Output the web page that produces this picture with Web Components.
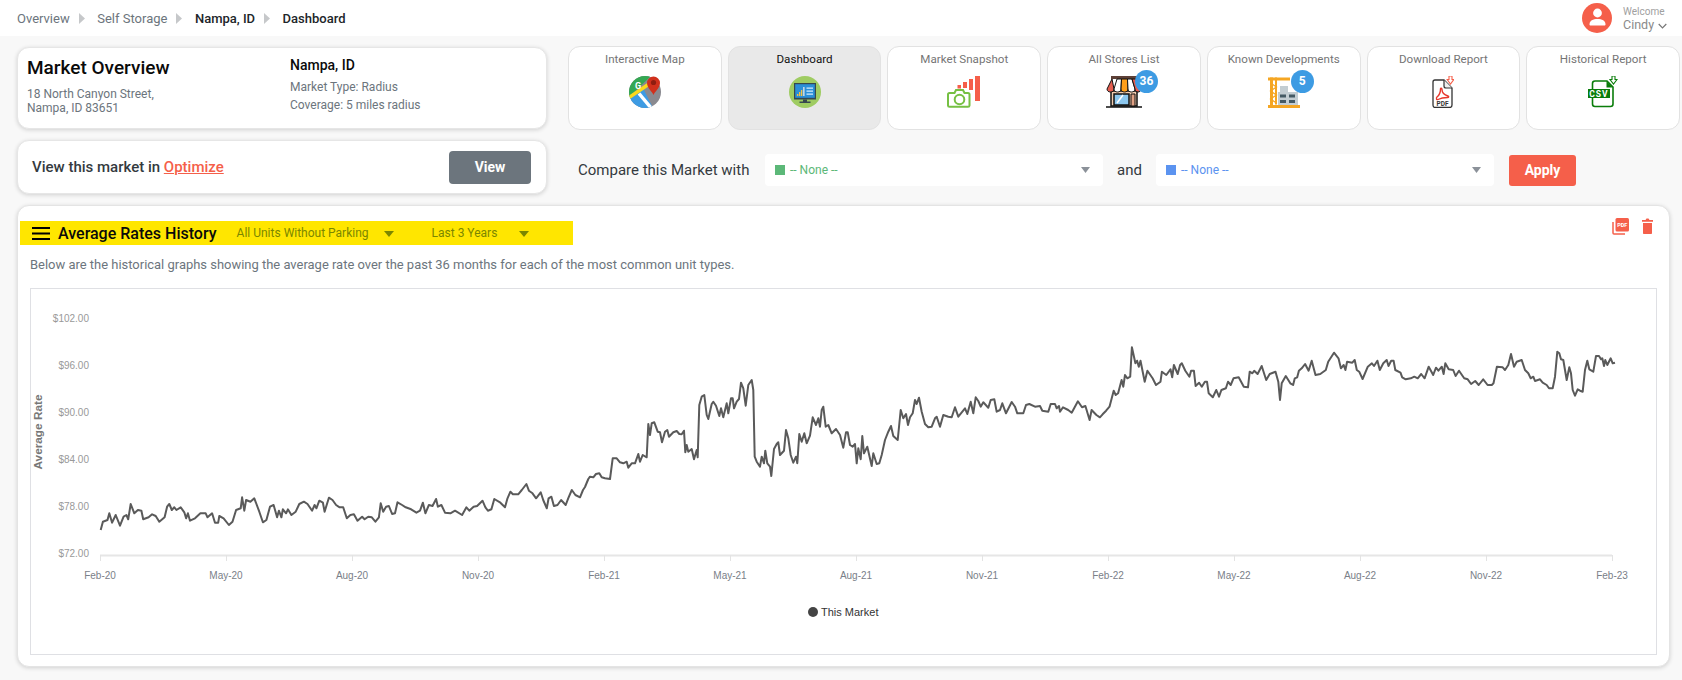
<!DOCTYPE html>
<html lang="en">
<head>
<meta charset="utf-8">
<title>Average Rates History</title>
<style>
  html, body { margin: 0; padding: 0; background: #f8f8f8; font-family: Roboto, "Liberation Sans", sans-serif; overflow: hidden; }
  market-page { width: 1682px; height: 680px; }
</style>
</head>
<body>
<market-page></market-page>
<script>
class AppTopbar extends HTMLElement {
  connectedCallback() {
    const arrow = '<svg class="arr" width="6" height="11" viewBox="0 0 6 11"><path d="M0 0l6 5.5L0 11z" fill="#c6c8ca"/></svg>';
    this.attachShadow({ mode: 'open' }).innerHTML = `
      <style>
        :host { display: flex; align-items: center; justify-content: space-between; height: 36px; background: #fff; padding: 0 15px 0 17px; box-sizing: border-box; }
        .crumbs { display: flex; align-items: center; font-size: 13px; color: #6c757d; }
        .arr { margin: 0 12.5px 0 9px; }
        b { font-weight: 500; color: #212529; }
        .user { display: flex; align-items: center; }
        .who { margin-left: 11px; color: #8a8a8a; font-size: 12.5px; line-height: 14px; width: 44px; white-space: nowrap; }
        .who small { display: block; font-size: 10px; line-height: 13px; color: #a0a0a0; }
        .who svg { margin-left: 1px; }
      </style>
      <div class="crumbs"><span>Overview</span>${arrow}<span>Self Storage</span>${arrow}<b>Nampa, ID</b>${arrow}<b>Dashboard</b></div>
      <div class="user">
        <svg width="30" height="30" viewBox="0 0 30 30"><circle cx="15" cy="15" r="15" fill="#f55f4a"/><circle cx="15.5" cy="10" r="4.4" fill="#fff"/><path d="M7.5 21.5c0-4 3.5-5.5 8-5.5s8 1.500 8 5.500c0 .6-.5 1-1 1h-14c-.5 0-1-.4-1-1z" fill="#fff"/></svg>
        <div class="who"><small>Welcome</small>Cindy <svg width="9" height="6" viewBox="0 0 9 6"><path d="M.7 1l3.800 3.800L8.300 1" fill="none" stroke="#777" stroke-width="1.200"/></svg></div>
      </div>`;
  }
}

class MarketCard extends HTMLElement {
  connectedCallback() {
    this.attachShadow({ mode: 'open' }).innerHTML = `
      <style>
        :host { display: flex; height: 82px; box-sizing: border-box; background: #fff; border: 1px solid #e6e6e6; border-radius: 12px; box-shadow: 0 1px 4px rgba(0,0,0,.16); padding: 7px 9px; color: #6c757d; }
        .l { width: 263px; }
        h2 { margin: 0 0 6px; font-size: 19px; line-height: 26px; font-weight: 500; color: #0a0a0a; }
        .addr { line-height: 14px; font-size: 12px; }
        h3 { margin: 0 0 3px; font-size: 14px; line-height: 20px; font-weight: 500; color: #0a0a0a; }
        .r div { line-height: 18px; font-size: 12px; }
      </style>
      <div class="l"><h2>Market Overview</h2><div class="addr">18 North Canyon Street,<br>Nampa, ID 83651</div></div>
      <div class="r"><h3>Nampa, ID</h3><div>Market Type: Radius</div><div>Coverage: 5 miles radius</div></div>`;
  }
}

class ViewCard extends HTMLElement {
  connectedCallback() {
    this.attachShadow({ mode: 'open' }).innerHTML = `
      <style>
        :host { display: flex; align-items: center; justify-content: space-between; height: 54px; box-sizing: border-box; background: #fff; border: 1px solid #e6e6e6; border-radius: 12px; box-shadow: 0 1px 4px rgba(0,0,0,.16); padding: 0 15px 0 14px; font-size: 15px; font-weight: 500; color: #343a40; }
        a { color: #f55f4a; text-decoration: underline; }
        button { width: 82px; height: 33px; border: 0; border-radius: 4px; background: #6c757d; color: #fff; font: 700 14px Roboto, sans-serif; }
      </style>
      <span>View this market in <a>Optimize</a></span><button>View</button>`;
  }
}

class NavTile extends HTMLElement {
  connectedCallback() {
    const active = this.hasAttribute('active');
    const badge = this.getAttribute('badge');
    this.attachShadow({ mode: 'open' }).innerHTML = `
      <style>
        :host { display: flex; flex-direction: column; align-items: center; box-sizing: border-box; height: 84px; background: ${active ? '#e9e9e9' : '#fff'}; border: 1px solid #e2e2e2; border-radius: 12px; padding-top: 4px; font-size: 11.6px; line-height: 16px; color: ${active ? '#111' : '#757575'}; }
        .ic { position: relative; margin-top: 9px; height: 32px; display: flex; }
        .n { position: absolute; top: -6px; right: var(--bx, -16px); width: 23px; height: 23px; border-radius: 50%; background: #3d9be3; color: #fff; font-size: 12px; font-weight: 700; line-height: 23px; text-align: center; }
      </style>
      <span>${this.getAttribute('label')}</span>
      <div class="ic"><slot></slot>${badge ? `<span class="n">${badge}</span>` : ''}</div>`;
  }
}

class SelectBox extends HTMLElement {
  connectedCallback() {
    const c = this.getAttribute('color');
    this.attachShadow({ mode: 'open' }).innerHTML = `
      <style>
        :host { display: flex; align-items: center; box-sizing: border-box; width: 338px; height: 32px; background: #fff; border-radius: 4px; padding: 0 13px 0 10px; font-size: 12px; color: ${c}; }
        i { width: 10px; height: 10px; background: ${c}; margin-right: 5px; }
        span { flex: 1; }
        svg { display: block; }
      </style>
      <i></i><span>-- None --</span>
      <svg width="9" height="6" viewBox="0 0 9 6"><path d="M0 0h9L4.500 6z" fill="#8b9199"/></svg>`;
  }
}

class CompareRow extends HTMLElement {
  connectedCallback() {
    this.attachShadow({ mode: 'open' }).innerHTML = `
      <style>
        :host { display: flex; align-items: center; padding: 24px 0 0 10px; font-size: 15px; color: #343a40; }
        .a { margin: 0 15px 0 14px; width: 24px; }
        .w { width: 187px; }
        button { margin-left: 15px; width: 67px; height: 31px; border: 0; border-radius: 3px; background: #f55f4a; color: #fff; font: 700 14px Roboto, sans-serif; }
      </style>
      <span class="w">Compare this Market with</span>
      <select-box color="#5cb878"></select-box>
      <span class="a">and</span>
      <select-box color="#5b93f0"></select-box>
      <button>Apply</button>`;
  }
}

class RateChart extends HTMLElement {
  connectedCallback() {
    // traced from the reference, one list per zoom crop: [x offset, x scale, y offset, y scale]
    const seg = (ox, sx, oy, sy, a) => { const o = []; for (let i = 0; i < a.length; i += 2) o.push((ox + a[i] / sx).toFixed(1) + ',' + (oy + a[i + 1] / sy).toFixed(1)); return o; };
    const pts = [
      ...seg(20, 2.8, 280, 3, [226,750,232,725,245,720,250,700,258,728,268,705,280,737,290,710,298,705,303,718,310,672,320,700,330,690,340,692,345,718,360,712,370,703,380,708,390,725,405,712,412,680,418,672,425,690,432,682,438,690,450,682,460,697,465,715,470,700,476,722,490,715,505,700,520,700,525,712,538,700,546,728,555,728,558,708,570,715,585,735,595,725,605,690,618,685,622,652,628,692,633,660,645,665,656,655,670,695,680,727,690,720,700,680,710,675,720,712,725,692,732,712,736,688,745,700,750,688,760,705,772,695,782,672,795,665,805,672,818,692,825,675,830,685,838,662,848,668,853,695,865,653,875,660,885,675,895,682,905,682,915,715,925,705,935,703,945,722,958,710,965,718,975,710,985,712,995,725,1005,712,1010,670,1017,695,1025,680,1033,678,1042,702,1050,700,1057,667,1070,675,1080,682,1095,688,1110,698,1120,692,1128,668,1135,700,1145,675,1155,678,1165,657,1170,680,1180,675,1190,698,1205,700,1218,692,1238,705,1250,682,1258,692,1270,680,1280,678,1295,662,1303,682,1310,692,1320,688,1328,657,1345,668,1358,682,1365,655,1373,635,1380,643,1395,643,1405,630,1418,612,1425,632,1435,640,1445,655,1458,637,1465,660,1475,685,1480,655,1488,650,1495,678,1505,675,1515,660,1528,675,1535,655,1545,630,1555,645,1568,652]),
      '583,490', '585,487',
      ...seg(560, 3, 300, 3, [85,537,90,530,100,532,108,522,118,520,125,532,135,535,150,537,158,475,170,475,180,487,190,490,200,485,205,503,215,490,225,490,235,462,240,485,248,465,260,472,265,372,270,405,275,370,283,367,293,395,300,397,306,427,315,395,322,390,327,410,340,397,350,393,358,402,365,403,372,392,376,457,380,435,385,455,395,447,402,478,410,450,413,472,418,315,425,290,433,285,440,345,445,357,455,312,460,305,468,317,478,348,483,325,490,352,500,310,505,340,513,295,518,295,522,325,530,305,537,297,543,248,550,265,557,317,565,255,575,240,580,270,584,470,590,485,600,500,605,470,612,490,616,452,622,490,630,500,634,528,642,447,650,432,655,427,660,465,672,452,678,390,685,415,692,465,700,488,708,470,712,490,718,402,725,425,733,400,740,430,750,407,758,352,768,375,775,355,780,380,785,330,790,320,797,380,805,375,815,400,828,387,840,405,850,443,858,397,863,397,870,435,878,440,885,432,890,490,895,445,902,478,907,408,912,460,922,440,935,498,940,460,950,492,958,490,965,465,975,420,985,395,993,378,1000,408,1013,420,1022,330,1030,355,1038,342,1044,375,1050,352,1058,340,1065,300,1070,312,1077,293,1085,335,1095,372,1105,382,1115,380,1125,355,1130,350,1140,380,1150,345,1165,350,1175,352,1185,322,1195,350,1215,325,1222,342,1232,305,1240,340,1247,292,1255,303,1262,320,1270,307,1285,323,1292,300,1303,298,1310,335,1320,330,1327,310,1338,340,1355,306,1365,320,1372,340,1390,340,1398,315,1408,312,1425,320,1440,318,1447,332,1465,335,1472,312,1485,312,1490,325,1497,318,1500,335]),
      ...seg(1020, 2.904, 300, 3, [125,322,140,330,150,338,168,304,180,322,190,318,202,360,208,330,222,345,232,352,240,343,250,332,260,320,272,272,278,285,285,280,295,240,300,260,305,225,312,235,320,230,325,142,335,190,340,182,345,200,350,182,362,245,370,212,385,235,395,255,408,245,412,215,425,225,437,208,442,232,447,195,458,222,465,195,470,190,480,212,492,230,497,212,505,212,510,258,520,248,528,260,537,245,543,245,548,280,560,292,570,270,578,290,585,270,598,265,604,245,612,255,620,235,635,232,650,260,662,262,667,215,675,220,680,212,690,222,702,198,715,240,725,222,742,215,750,245,755,300,760,250,772,228,785,250,793,255,798,235,805,232,810,212,818,205,828,192,838,212,847,182,858,225,872,222,888,210,895,185,912,158,925,175,932,205,940,195,945,210,950,185,965,188,972,180,978,210,985,215,995,237,1010,200,1022,190,1028,198,1038,182,1045,210,1055,190,1065,180,1070,198,1078,182,1085,182,1090,210,1105,218,1110,232,1120,238,1135,235,1145,230,1155,235,1165,222,1175,235,1187,200,1200,225,1208,203,1215,212,1225,200,1230,222,1235,190,1245,208,1258,210,1265,228,1275,212,1290,235,1300,238,1310,252,1322,243,1332,255,1345,238,1358,255,1370,255,1375,250,1385,200]),
      ...seg(1500, 3, 330, 3, [8,112,15,120,25,105,33,72,42,110,50,95,65,90,75,120,85,130,92,145,100,140,105,153,120,148,128,158,140,165,147,175,158,175,165,140,172,65,178,70,183,88,190,90,200,150,208,112,213,130,218,180,225,197,233,178,240,182,248,185,255,120,262,92,268,118,280,125,288,78,297,78,303,88,307,85,312,108,316,90,322,105,332,85,338,100,345,98])
    ];
    const months = ['Feb-20','May-20','Aug-20','Nov-20','Feb-21','May-21','Aug-21','Nov-21','Feb-22','May-22','Aug-22','Nov-22','Feb-23'];
    const rates = ['$102.00','$96.00','$90.00','$84.00','$78.00','$72.00'];
    const ticks = months.map((m, i) => { const x = 100 + i * 126; return `<path d="M${x + .5} 555v6" stroke="#e3e3e3"/><text x="${x}" y="579" text-anchor="middle" fill="#7a8088">${m}</text>`; }).join('');
    const ylab = rates.map((r, i) => `<text x="89" y="${321.5 + i * 47}" text-anchor="end" fill="#999">${r}</text>`).join('');
    this.attachShadow({ mode: 'open' }).innerHTML = `
      <style>
        :host { display: block; height: 367px; margin: 0 12px; border: 1px solid #dfe0e4; box-sizing: border-box; background: #fff; }
        svg { display: block; font: 10px "Liberation Sans", Arial, sans-serif; }
      </style>
      <svg width="1626" height="365" viewBox="31 289 1626 365">
        <path d="M100 555.500H1612" stroke="#e6e6e6" stroke-width="2"/>
        ${ticks}${ylab}
        <text transform="translate(42 432) rotate(-90)" text-anchor="middle" font-size="11.800" font-weight="700" fill="#777">Average Rate</text>
        <polyline points="${pts.join(' ')}" fill="none" stroke="#5a5a5a" stroke-width="2" stroke-linejoin="round"/>
        <circle cx="813" cy="612" r="5" fill="#444"/>
        <text x="821" y="616" font-size="11" fill="#333">This Market</text>
      </svg>`;
  }
}

class RatesPanel extends HTMLElement {
  connectedCallback() {
    const caret = '<svg width="10" height="6" viewBox="0 0 10 6"><path d="M0 0h10L5 6z" fill="#7b8600"/></svg>';
    this.attachShadow({ mode: 'open' }).innerHTML = `
      <style>
        :host { display: block; height: 462px; box-sizing: border-box; background: #fff; border: 1px solid #e4e4e4; border-radius: 12px; box-shadow: 0 1px 4px rgba(0,0,0,.16); padding-top: 15px; }
        .head { display: flex; justify-content: space-between; align-items: flex-start; padding: 0 16px 0 2px; }
        .strip { display: flex; align-items: center; width: 553px; height: 24px; box-sizing: border-box; background: #ffe600; padding-left: 12px; font-size: 12px; color: #7b8600; }
        .strip h4 { margin: 0 20px 0 8px; font-size: 16px; font-weight: 500; color: #0a0a0a; }
        .burger { display: block; }
        .dd1 svg { margin-left: 15px; }
        .dd2 { margin-left: 38px; }
        .dd2 svg { margin-left: 22px; }
        .tools { display: flex; gap: 13px; margin-top: -3px; }
        p { margin: 10px 0 13px 12px; font-size: 12.96px; line-height: 20px; color: #6c757d; }
      </style>
      <div class="head">
        <div class="strip">
          <svg class="burger" width="18" height="13" viewBox="0 0 18 13"><path d="M0 1h18M0 6.500h18M0 12h18" stroke="#000" stroke-width="2"/></svg>
          <h4>Average Rates History</h4>
          <span class="dd1">All Units Without Parking${caret}</span>
          <span class="dd2">Last 3 Years${caret}</span>
        </div>
        <div class="tools">
          <svg width="17" height="17" viewBox="0 0 17 17"><path d="M1 4v11c0 .6.400 1 1 1h11" fill="none" stroke="#f55f4a" stroke-width="1.500"/><rect x="3.500" y="0" width="13.500" height="13.500" rx="1.500" fill="#f55f4a"/><text x="10.200" y="9" font-family="Roboto,sans-serif" font-size="5.500" font-weight="700" fill="#fff" text-anchor="middle">PDF</text></svg>
          <svg width="11" height="16" viewBox="0 0 11 16"><path d="M0 2h3.500l1-1.500h2l1 1.500H11v1.800H0zM1 5h9v10c0 .6-.400 1-1 1H2c-.6 0-1-.4-1-1z" fill="#f55f4a"/></svg>
        </div>
      </div>
      <p>Below are the historical graphs showing the average rate over the past 36 months for each of the most common unit types.</p>
      <rate-chart></rate-chart>`;
  }
}

class MarketPage extends HTMLElement {
  connectedCallback() {
    this.attachShadow({ mode: 'open' }).innerHTML = `
      <style>
        :host { display: block; color: #343a40; font-family: Roboto, "Liberation Sans", sans-serif; }
        main { padding: 11px 1px 0 17px; }
        .top { display: grid; grid-template-columns: 530px 1fr; column-gap: 21px; }
        .left { display: flex; flex-direction: column; gap: 11px; }
        .tiles { display: grid; grid-template-columns: repeat(7, 1fr); gap: 6px; margin: -1px 1px 0 0; }
        rates-panel { margin: 11px 11px 0 0; }
        svg { display: block; }
      </style>
      <app-topbar></app-topbar>
      <main>
        <div class="top">
          <div class="left"><market-card></market-card><view-card></view-card></div>
          <div>
            <div class="tiles">
              <nav-tile label="Interactive Map">
                <svg width="32" height="32" viewBox="0 0 32 32"><defs><clipPath id="mc"><circle cx="16" cy="16" r="16"/></clipPath></defs><g clip-path="url(#mc)"><rect width="32" height="32" fill="#8a8a90"/><path d="M0 0h22L0 21z" fill="#34a853"/><path d="M0 21L14 12l10 20H0z" fill="#3d9be3"/><path d="M0 21.500L20 8" stroke="#fbd81c" stroke-width="3.500"/><path d="M10 17.500L23 33" stroke="#fff" stroke-width="3.500"/></g><path d="M24.500 19c-1-3-6.500-7-6.500-12a6.500 6.500 0 0 1 13 0c0 5-5.500 9-6.500 12z" fill="#d0301c"/><circle cx="24.500" cy="6.500" r="2.600" fill="#8e1d10"/><text x="9" y="13" font-family="Roboto,sans-serif" font-size="9" font-weight="700" fill="#fff" text-anchor="middle">G</text></svg>
              </nav-tile>
              <nav-tile label="Dashboard" active>
                <svg width="32" height="32" viewBox="0 0 32 32"><circle cx="16" cy="16" r="16" fill="#9fcc62"/><rect x="5" y="7" width="22" height="16.500" fill="#37474f"/><rect x="6.200" y="8.200" width="19.600" height="13.600" fill="#2b8fd8"/><path d="M8 20v-2h1.300v2zM10 20v-4h1.300v4zM12 20v-6h1.300v6z" fill="#f5c242"/><path d="M14.200 20V11h1.300v9z" fill="#e8e8e8"/><path d="M17.500 11.500h6.500v1.300h-6.500zM17.500 14.500h6.500v1.300h-6.500zM17.500 17.500h6.500v1.300h-6.500z" fill="#d6eefc"/><path d="M14 23.500h4v2h3.500V27h-11v-1.500H14z" fill="#37474f"/></svg>
              </nav-tile>
              <nav-tile label="Market Snapshot">
                <svg width="34" height="32" viewBox="0 0 34 32"><path d="M10.500 9h3.500v3.500h-3.500zM16 6h4v6h-4zM22 3h4v11h-4zM28 0h5v25h-5z" fill="#f55f4a"/><path d="M2.500 17h5l1.500-3h7l1.500 3h3.500c1 0 1.500.7 1.500 1.500V29.500c0 .8-.5 1.300-1.500 1.300H2.500c-1 0-1.500-.5-1.500-1.300V18.500c0-.8.500-1.500 1.500-1.500z" fill="#fff" stroke="#76c043" stroke-width="2"/><circle cx="12.500" cy="23.500" r="4.800" fill="#fff" stroke="#76c043" stroke-width="2"/></svg>
              </nav-tile>
              <nav-tile label="All Stores List" badge="36" style="--bx:-16px">
                <svg width="36" height="32" viewBox="0 0 36 32"><rect x="5" y="0" width="26" height="3" fill="#5d4037"/><rect x="5" y="15" width="26" height="15" fill="#f3cdb0" stroke="#111" stroke-width="1.500"/><rect x="8" y="18" width="15" height="11" fill="#8cc7ee" stroke="#111" stroke-width="1.500"/><path d="M11 27l6-8" stroke="#fff" stroke-width="1.500"/><path d="M25 18h4v12h-4z" fill="#e0a184" stroke="#111"/><path d="M6 3L1 13c0 4 7 4 7 0z" fill="#e35d4f" stroke="#111"/><path d="M11 3l-3 10c0 4 7 4 7 0l.5-10z" fill="#fff" stroke="#111"/><path d="M15.500 3L15 13c0 4 7 4 7 0l-.500-10z" fill="#ff9f1c" stroke="#111"/><path d="M21.500 3l.500 10c0 4 7 4 7 0L26 3z" fill="#fff" stroke="#111"/><path d="M26 3l3 10c0 4 6 4 6 0L30 3z" fill="#e35d4f" stroke="#111"/><path d="M0 31h36" stroke="#111" stroke-width="1.500"/></svg>
              </nav-tile>
              <nav-tile label="Known Developments" badge="5" style="--bx:-14px">
                <svg width="32" height="32" viewBox="0 0 32 32"><path d="M0 3h22" stroke="#f5a623" stroke-width="3"/><path d="M2 1.500h3v28H2zM7 1.500h2v27H7z" fill="#f5a623"/><path d="M2.500 7l6 4-6 4 6 4-6 4 6 4" fill="none" stroke="#f5a623" stroke-width="1.200"/><rect x="10" y="16" width="20" height="13" fill="#c3cdd2"/><rect x="12" y="10" width="8" height="6" fill="#c3cdd2"/><path d="M12 18.500h6v3h-6zM21 18.500h6v3h-6zM12 24h6v3h-6zM21 24h6v3h-6z" fill="#455a64"/><rect x="0" y="29" width="32" height="3" fill="#f5a623"/></svg>
              </nav-tile>
              <nav-tile label="Download Report">
                <svg width="22" height="32" viewBox="0 0 22 32"><path d="M3 4h9l8 8v17c0 1.500-1 2.500-2.500 2.500h-14.500C2 31.500 1 30.500 1 29V6c0-1 1-2 2-2z" fill="#fff" stroke="#333" stroke-width="1.300"/><path d="M12 4v6c0 1.500 1 2 2 2h6" fill="#eee" stroke="#333" stroke-width="1.200"/><path d="M5 21c2.500-2 3.500-5 3.500-8 0-1.500 1.500-1 1.500.5 0 3 2.500 5.500 6 6.500 1 .3 1 1.500-.5 1.500-3.500 0-7 .7-9.500 2-1.500.8-2-1.500-1-2.500z" fill="none" stroke="#e8372c" stroke-width="1.400"/><text x="10.500" y="29.500" font-family="Roboto,sans-serif" font-size="6.500" font-weight="700" fill="#333" text-anchor="middle">PDF</text><path d="M17 0h3v3.500h1.800L18.500 8 15.200 3.500H17z" fill="#fff" stroke="#f55f4a" stroke-width="1.100"/></svg>
              </nav-tile>
              <nav-tile label="Historical Report">
                <svg width="30" height="32" viewBox="0 0 30 32"><path d="M7 5h12l6 6v17c0 1.500-1 2.500-2.500 2.500H7C5.500 30.500 4.500 29.500 4.500 28V7.500C4.500 6 5.500 5 7 5z" fill="#fff" stroke="#0a7d0a" stroke-width="1.600"/><path d="M18.500 5l6.500 6.500h-6.500z" fill="#0a7d0a"/><rect x="0" y="13" width="22" height="9" fill="#0a7d0a"/><text x="11" y="20.500" font-family="Roboto,sans-serif" font-size="8.500" font-weight="700" letter-spacing="1" fill="#fff" text-anchor="middle">CSV</text><path d="M24 0h3v3.500h2L25.500 8 22 3.500h2z" fill="#fff" stroke="#0a7d0a" stroke-width="1.100"/></svg>
              </nav-tile>
            </div>
            <compare-row></compare-row>
          </div>
        </div>
        <rates-panel></rates-panel>
      </main>`;
  }
}

customElements.define('app-topbar', AppTopbar);
customElements.define('market-card', MarketCard);
customElements.define('view-card', ViewCard);
customElements.define('nav-tile', NavTile);
customElements.define('select-box', SelectBox);
customElements.define('compare-row', CompareRow);
customElements.define('rate-chart', RateChart);
customElements.define('rates-panel', RatesPanel);
customElements.define('market-page', MarketPage);
</script>
</body>
</html>
